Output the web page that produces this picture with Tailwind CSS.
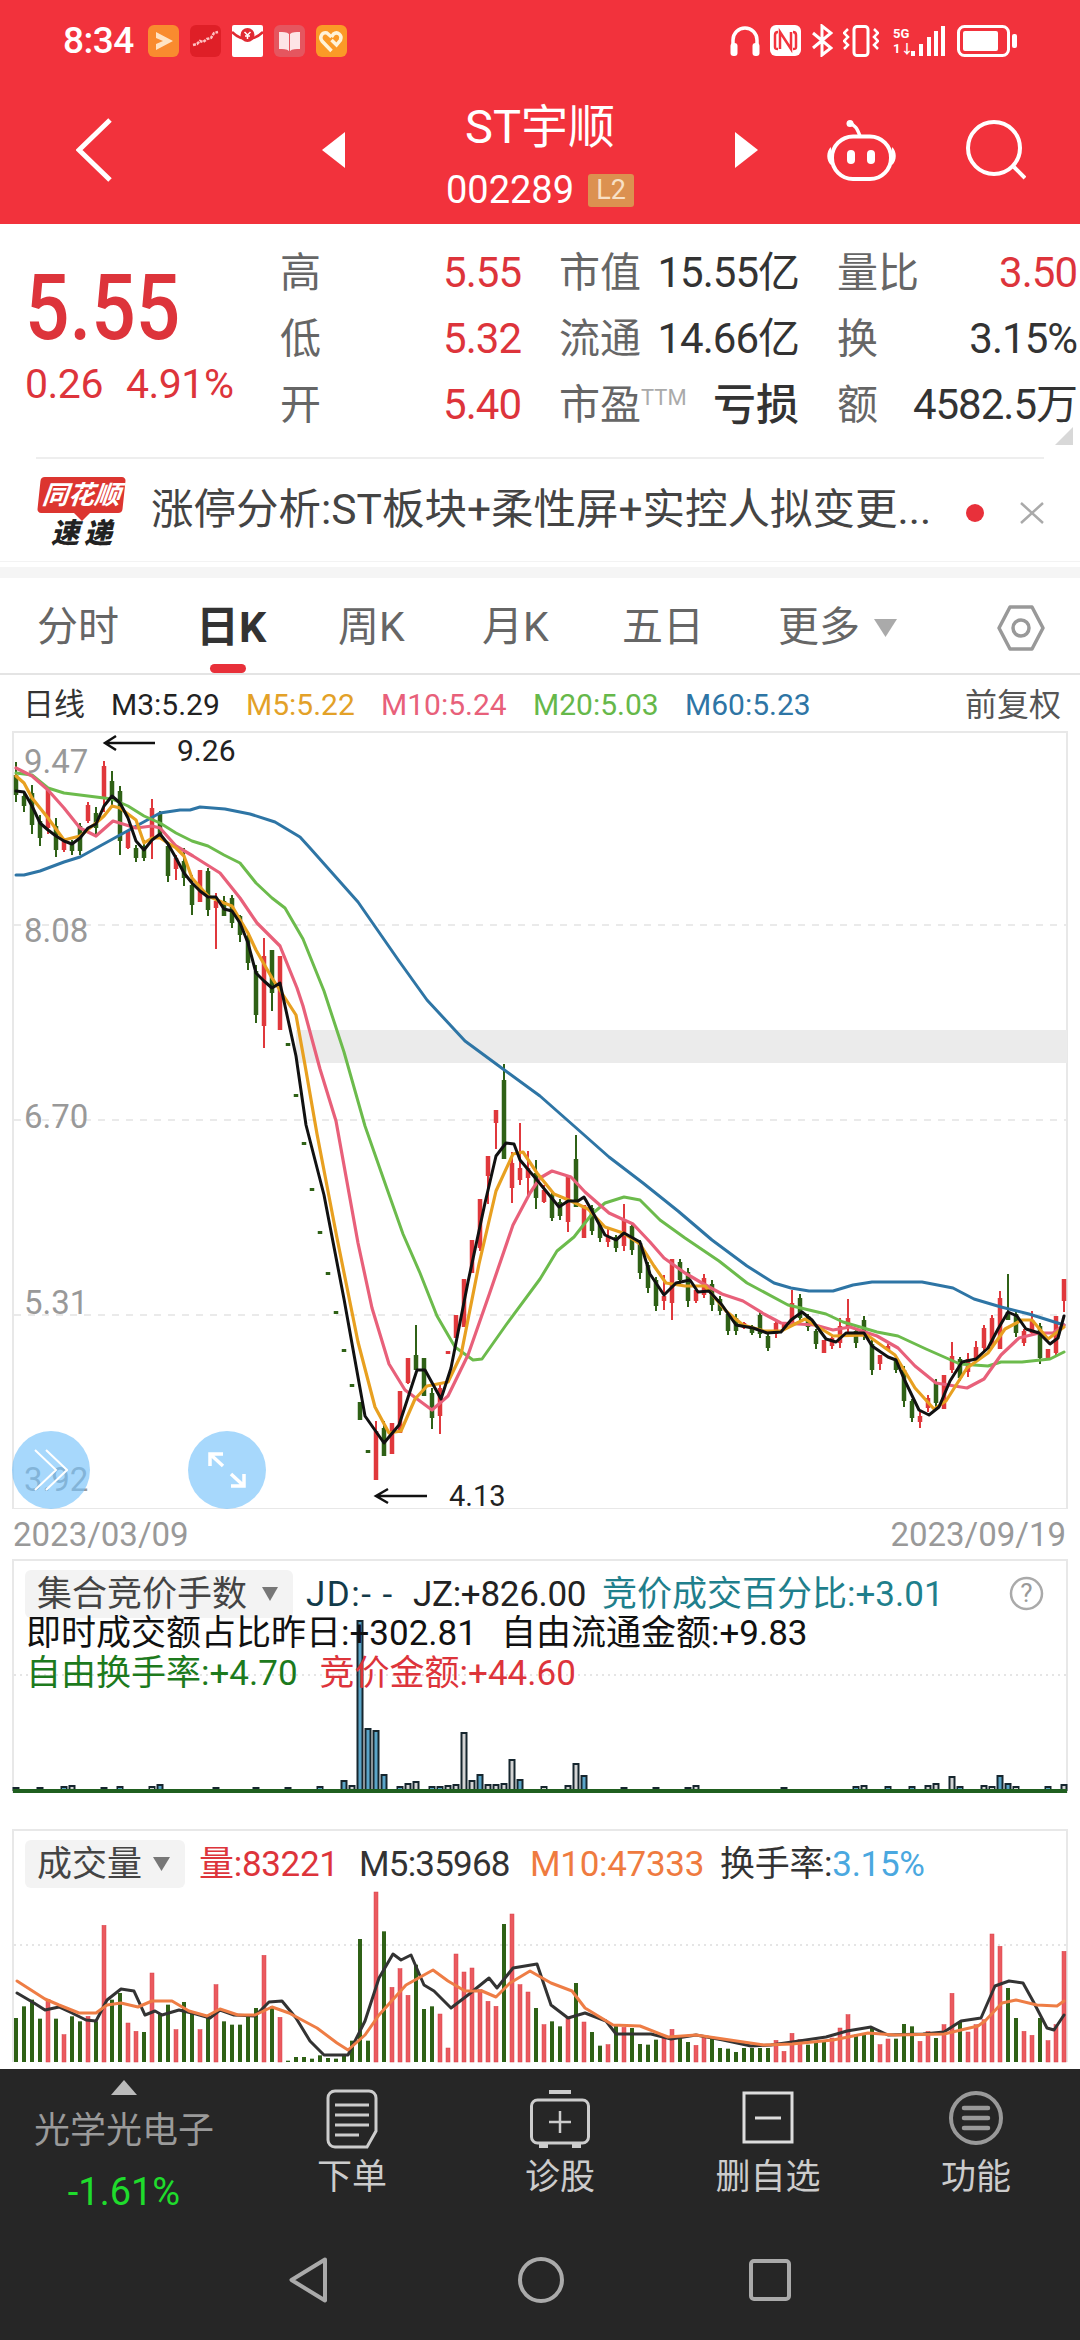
<!DOCTYPE html>
<html lang="zh-CN">
<head>
    <meta charset="UTF-8">
    <meta name="viewport" content="width=device-width, initial-scale=1.0">
    <title>ST宇顺 002289</title>
    <script src="https://cdn.jsdelivr.net/npm/@tailwindcss/browser@4"></script>
</head>
<body class="bg-white font-[Roboto,'Noto_Sans_CJK_SC',sans-serif]">
<div class="w-[1080px] h-[2340px] flex flex-col overflow-hidden">

    <!-- Red header -->
    <header class="h-[224px] shrink-0 bg-[#f2323c] text-white flex flex-col">
        <div class="h-[80px] flex items-center pl-[63px] pt-[1px]">
            <span class="w-[85px] text-[37px] leading-none font-medium tracking-[-0.5px] whitespace-nowrap">8:34</span>
            <div class="flex gap-[11px]">
                <svg class="w-[31px] h-[32px]" viewBox="0 0 31 32"><rect width="31" height="32" rx="6" fill="#f98b2f"/><path d="M8 7l17 9-17 9v-6l7-3-7-3z" fill="#ffe3c4"/></svg>
                <svg class="w-[31px] h-[32px]" viewBox="0 0 31 32"><rect width="31" height="32" rx="6" fill="#df1f27"/><path d="M3 20l4-1 3-3 3 1 4-3 4-1 3-5 4-1" fill="none" stroke="#ffc0c0" stroke-width="2.5" stroke-dasharray="3 1"/></svg>
                <svg class="w-[31px] h-[32px]" viewBox="0 0 31 32"><rect width="31" height="32" rx="2" fill="#fff"/><path d="M0 7c5 5 9 7 15.500 7S26 12 31 7" fill="none" stroke="#e02a33" stroke-width="2.500"/><circle cx="15.500" cy="10" r="7" fill="#e02a33"/><path d="M12.500 7l3 3 3-3M15.500 10v4M13 11h5" fill="none" stroke="#fff" stroke-width="1.500"/></svg>
                <svg class="w-[31px] h-[32px]" viewBox="0 0 31 32"><rect width="31" height="32" rx="6" fill="#e5565f"/><path d="M5 7c4 0 8 0 10 2v17c-2-2-6-2-10-2zM26 7c-4 0-8 0-10 2v17c2-2 6-2 10-2z" fill="#fde4e6"/></svg>
                <svg class="w-[31px] h-[32px]" viewBox="0 0 31 32"><rect width="31" height="32" rx="6" fill="#fb9a27"/><path d="M15.500 26L6 16c-3-4 0-9 5-8l4.500 4M15.500 12l2-3c4-3 9 1 7 6l-4 5-5-5" fill="none" stroke="#fff3d8" stroke-width="3.500"/></svg>
            </div>
            <div class="ml-auto mr-[63px] flex items-center">
                <svg class="w-[30px] h-[32px]" viewBox="0 0 30 32"><path d="M3 24V15a12 12 0 0124 0v9" fill="none" stroke="#fff" stroke-width="3.500"/><rect x="0.500" y="18" width="7" height="13" rx="3" fill="#fff"/><rect x="22.500" y="18" width="7" height="13" rx="3" fill="#fff"/></svg>
                <svg class="w-[31px] h-[31px] ml-[10px]" viewBox="0 0 31 31"><rect width="31" height="31" rx="6" fill="#fff"/><path d="M8 7c-2 0-3 1-3 3v12c0 2 1 2 3 2M10 24V7l11 17V7M23 7c2 0 3 1 3 3v12c0 2-1 2-3 2" fill="none" stroke="#f2323c" stroke-width="2.500"/></svg>
                <svg class="w-[22px] h-[33px] ml-[10px]" viewBox="0 0 22 33"><path d="M2 9l18 15-9 7V2l9 7L2 24" fill="none" stroke="#fff" stroke-width="3"/></svg>
                <svg class="w-[36px] h-[32px] ml-[10px]" viewBox="0 0 36 32"><rect x="11" y="1.500" width="14" height="29" rx="3" fill="none" stroke="#fff" stroke-width="3"/><path d="M5 4L1 8l4 4-4 4 4 4-4 4M31 4l4 4-4 4 4 4-4 4 4 4" fill="none" stroke="#fff" stroke-width="2.500"/></svg>
                <div class="w-[16px] ml-[14px] flex flex-col items-start leading-none text-white font-bold">
                    <span class="text-[13px] leading-[15px]">5G</span>
                    <span class="text-[13px] leading-[15px]">1↓</span>
                </div>
                <svg class="w-[36px] h-[32px] ml-[0px]" viewBox="0 0 36 32"><path d="M2 26h4v5H2zM10 19h4v12h-4zM18 12h4v19h-4zM25 6h4v25h-4zM32 1h4v30h-4z" fill="#fff"/></svg>
                <svg class="w-[60px] h-[32px] ml-[12px]" viewBox="0 0 60 32"><rect x="1.500" y="1.500" width="50" height="29" rx="6" fill="none" stroke="#fff" stroke-width="3"/><rect x="6" y="6" width="35" height="20" rx="2" fill="#fff"/><rect x="55" y="9" width="5" height="14" rx="2" fill="#fff"/></svg>
            </div>
        </div>
        <div class="h-[144px] flex items-center pl-[76px] pb-[4px]">
            <svg class="w-[36px] h-[64px]" viewBox="0 0 36 64"><path d="M34 2L3 32l31 30" fill="none" stroke="#fff" stroke-width="5"/></svg>
            <svg class="w-[23px] h-[36px] ml-[210px]" viewBox="0 0 23 36"><path d="M23 0v36L0 18z" fill="#fff"/></svg>
            <div class="w-[390px] flex flex-col items-center pt-[10px]">
                <div class="text-[47px] leading-[54px]">ST宇顺</div>
                <div class="flex items-center mt-[16px]">
                    <span class="text-[38px] leading-[40px]">002289</span>
                    <span class="ml-[14px] w-[46px] h-[33px] bg-[#dc9150] text-[#f8e0c6] rounded-[3px] text-[27px] leading-[33px] text-center">L2</span>
                </div>
            </div>
            <svg class="w-[23px] h-[36px]" viewBox="0 0 23 36"><path d="M0 0v36l23-18z" fill="#fff"/></svg>
            <svg class="w-[69px] h-[61px] ml-[69px]" viewBox="0 0 69 61"><path d="M33 16C30 8 28 5 22 3" fill="none" stroke="#fff" stroke-width="3.500" stroke-linecap="round"/><circle cx="23" cy="3.500" r="3.500" fill="#fff"/><rect x="5" y="16.500" width="59" height="42.500" rx="21" fill="none" stroke="#fff" stroke-width="4"/><path d="M4 27c-5 4-5 14 0 18zM65 27c5 4 5 14 0 18z" fill="#fff"/><rect x="20" y="30" width="8" height="14" rx="4" fill="#fff"/><rect x="40" y="30" width="8" height="14" rx="4" fill="#fff"/></svg>
            <svg class="w-[60px] h-[60px] ml-[70px]" viewBox="0 0 60 60"><circle cx="28" cy="28" r="26" fill="none" stroke="#fff" stroke-width="4"/><path d="M48 47l11 11" stroke="#fff" stroke-width="4"/></svg>
        </div>
    </header>

    <!-- Quote -->
    <section class="h-[235px] shrink-0 relative flex">
        <div class="w-[280px] shrink-0 pl-[25px] text-[#dd343b]">
            <div class="mt-[40px] h-[90px] flex items-center text-[90px] leading-none font-medium origin-left scale-x-[0.87]">5.55</div>
            <div class="mt-[8px] h-[44px] flex items-center text-[41px] leading-none tracking-[-0.5px] gap-[23px]">
                <span>0.26</span><span>4.91%</span>
            </div>
        </div>
        <div class="mt-[16px] grid grid-cols-[241px_240px_240px] grid-rows-[66px_66px_66px] gap-x-[38px] text-[#666] text-[41px] leading-none">
            <div class="flex items-center justify-between"><span>高</span><span class="text-[#dd343b] text-[42px] tracking-[-1px]">5.55</span></div>
            <div class="flex items-center justify-between"><span>市值</span><span class="text-[#333] text-[42px] tracking-[-1px]">15.55亿</span></div>
            <div class="flex items-center justify-between"><span>量比</span><span class="text-[#dd343b] text-[42px] tracking-[-1px]">3.50</span></div>
            <div class="flex items-center justify-between"><span>低</span><span class="text-[#dd343b] text-[42px] tracking-[-1px]">5.32</span></div>
            <div class="flex items-center justify-between"><span>流通</span><span class="text-[#333] text-[42px] tracking-[-1px]">14.66亿</span></div>
            <div class="flex items-center justify-between"><span>换</span><span class="text-[#333] text-[42px] tracking-[-1px]">3.15%</span></div>
            <div class="flex items-center justify-between"><span>开</span><span class="text-[#dd343b] text-[42px] tracking-[-1px]">5.40</span></div>
            <div class="flex items-center justify-between"><span class="flex items-start">市盈<span class="text-[22px] text-[#aaa] mt-[2px]">TTM</span></span><span class="text-[#333] text-[43px] font-medium">亏损</span></div>
            <div class="flex items-center justify-between"><span>额</span><span class="text-[#333] text-[42px] tracking-[-1px]">4582.5万</span></div>
        </div>
        <div class="absolute left-[1055px] top-[203px] w-[18px] h-[18px] bg-[#d8d8d8] [clip-path:polygon(100%_0,100%_100%,0_100%)]"></div>
        <div class="absolute left-[36px] right-[36px] bottom-0 h-[2px] bg-[#eee]"></div>
    </section>

    <!-- News ticker -->
    <section class="h-[103px] shrink-0 flex items-center relative border-b border-[#f3f3f3]">
        <div class="absolute left-[38px] top-[18px] w-[87px] flex flex-col items-center">
            <div class="w-[85px] h-[36px] bg-[#dc3530] rounded-[4px] -skew-x-6 text-white text-[26px] leading-[36px] font-bold italic text-center whitespace-nowrap">同花顺</div>
            <div class="w-0 h-0 border-x-[8px] border-x-transparent border-t-[8px] border-t-[#dc3530]"></div>
            <div class="text-[28px] leading-[28px] font-black italic text-[#222] tracking-[5px] -mt-[1px] pl-[5px] whitespace-nowrap">速递</div>
        </div>
        <div class="ml-[151px] w-[780px] text-[42.500px] leading-none text-[#444] whitespace-nowrap">涨停分析:ST板块+柔性屏+实控人拟变更...</div>
        <div class="absolute left-[966px] top-[45px] w-[18px] h-[18px] rounded-full bg-[#e8303a]"></div>
        <svg class="absolute left-[1020px] top-[43px] w-[24px] h-[22px]" viewBox="0 0 24 22"><path d="M1 1l22 20M23 1L1 21" stroke="#aaa" stroke-width="2.500"/></svg>
    </section>
    <div class="h-[5px] shrink-0"></div>
    <div class="h-[11px] shrink-0 bg-[#f5f5f5]"></div>

    <!-- Period tabs -->
    <nav class="h-[97px] shrink-0 relative flex items-center pl-[37px] pt-[4px] border-b-2 border-[#e4e4e4] text-[41px] leading-none text-[#666]">
        <span class="w-[159px]">分时</span>
        <span class="w-[142px] font-bold text-[#333] text-[43px]">日K</span>
        <span class="w-[144px]">周K</span>
        <span class="w-[140px]">月K</span>
        <span class="w-[156px]">五日</span>
        <span class="w-[96px]">更多</span>
        <svg class="w-[23px] h-[18px]" viewBox="0 0 23 18"><path d="M0 0h23L11.500 18z" fill="#aaa"/></svg>
        <svg class="w-[48px] h-[46px] ml-[100px]" viewBox="0 0 48 46"><path d="M13 2h22l11 21-11 21H13L2 23z" fill="none" stroke="#999" stroke-width="3.500" stroke-linejoin="round"/><circle cx="24" cy="23" r="8" fill="none" stroke="#999" stroke-width="3.500"/></svg>
        <div class="absolute left-[210px] bottom-0 w-[36px] h-[9px] rounded-full bg-[#e8303a]"></div>
    </nav>

    <!-- Moving average legend -->
    <div class="h-[56px] shrink-0 flex items-center pl-[23px] pr-[19px] pt-[3px] text-[30px] leading-none whitespace-nowrap">
        <span class="w-[88px] text-[#333] text-[31px]">日线</span>
        <span class="w-[135px] text-[#222]">M3:5.29</span>
        <span class="w-[135px] text-[#e3a128]">M5:5.22</span>
        <span class="w-[152px] text-[#e8607a]">M10:5.24</span>
        <span class="w-[152px] text-[#66b84a]">M20:5.03</span>
        <span class="w-[152px] text-[#2e75a5]">M60:5.23</span>
        <span class="ml-auto text-[32px] text-[#555]">前复权</span>
    </div>

    <!-- Main K-line chart -->
    <section class="h-[778px] shrink-0 relative text-[33px] leading-none text-[#999]">
        <svg id="kline" class="absolute inset-0 w-[1080px] h-[778px]" viewBox="0 733 1080 778"></svg>
        <span class="absolute left-[24px] top-[14px]">9.47</span>
        <span class="absolute left-[24px] top-[183px]">8.08</span>
        <span class="absolute left-[24px] top-[369px]">6.70</span>
        <span class="absolute left-[24px] top-[555px]">5.31</span>
        <span class="absolute left-[24px] top-[732px]">3.92</span>
        <span class="absolute left-[177px] top-[5px] text-[30px] text-[#222]">9.26</span>
        <span class="absolute left-[449px] top-[751px] text-[29px] text-[#222]">4.13</span>
        <div class="absolute left-[12px] top-[700px] w-[78px] h-[78px] rounded-full bg-[#78c3fa]/65 flex items-center justify-center">
            <svg class="w-[34px] h-[42px]" viewBox="0 0 34 42"><path d="M1 1l21 20-21 20M12 1l21 20-21 20" fill="none" stroke="#fff" stroke-width="2"/></svg>
        </div>
        <div class="absolute left-[188px] top-[700px] w-[78px] h-[78px] rounded-full bg-[#78c3fa]/65 flex items-center justify-center">
            <svg class="w-[40px] h-[38px]" viewBox="0 0 40 38"><path d="M3 3l13 12M3 15V3h13M37 35L24 23M37 23v12H24" fill="none" stroke="#fff" stroke-width="3.500"/></svg>
        </div>
    </section>
    <div class="h-[50px] shrink-0 flex items-center justify-between pl-[13px] pr-[14px] text-[33px] leading-none text-[#999]">
        <span>2023/03/09</span><span>2023/09/19</span>
    </div>

    <!-- Auction panel -->
    <section class="h-[270px] shrink-0 relative text-[35px] leading-none whitespace-nowrap">
        <svg id="auction" class="absolute inset-0 w-[1080px] h-[270px]" viewBox="0 1561 1080 270"></svg>
        <div class="relative flex items-center pt-[11px] h-[59px] pl-[25px]">
            <div class="w-[268px] h-[48px] rounded-[6px] bg-[#f3f3f3] flex items-center pl-[12px] text-[#444]">
                <span class="w-[225px]">集合竞价手数</span>
                <svg class="w-[16px] h-[16px]" viewBox="0 0 16 16"><path d="M0 1h16L8 15z" fill="#777"/></svg>
            </div>
            <span class="absolute left-[306px] top-[18px] text-[#123b4a] tracking-[1.500px]">JD:- -</span>
            <span class="absolute left-[413px] top-[18px] text-[#222] tracking-[-0.3px]">JZ:+826.00</span>
            <span class="absolute left-[602px] top-[18px] text-[#1f7f8c]">竞价成交百分比:+3.01</span>
            <svg class="absolute left-[1009px] top-[17px] w-[35px] h-[35px]" viewBox="0 0 35 35"><circle cx="17.500" cy="17.500" r="15.500" fill="none" stroke="#aaa" stroke-width="2.500"/></svg>
            <span class="absolute left-[1009px] top-[21px] w-[35px] text-center text-[26px] text-[#999]">?</span>
        </div>
        <div class="relative pl-[26px] h-[40px] flex items-center gap-[24px] text-[#111] mt-[-5px]"><span>即时成交额占比昨日:+302.81</span><span>自由流通金额:+9.83</span></div>
        <div class="relative pl-[26px] h-[40px] flex items-center gap-[22px]"><span class="text-[#1d7a1d]">自由换手率:+4.70</span><span class="text-[#dd343b]">竞价金额:+44.60</span></div>
    </section>

    <!-- Volume panel -->
    <section class="h-[240px] shrink-0 relative text-[35px] leading-none whitespace-nowrap">
        <svg id="volume" class="absolute inset-0 w-[1080px] h-[240px]" viewBox="0 1831 1080 240"></svg>
        <div class="relative pt-[11px] pl-[25px] flex items-center h-[59px]">
            <div class="w-[160px] h-[48px] rounded-[6px] bg-[#f3f3f3] flex items-center pl-[12px] text-[#444]">
                <span class="w-[116px]">成交量</span>
                <svg class="w-[17px] h-[16px]" viewBox="0 0 17 16"><path d="M0 1h17L8.500 15z" fill="#777"/></svg>
            </div>
            <span class="absolute left-[199px] top-[18px] text-[#dd343b] tracking-[-0.3px]">量:83221</span>
            <span class="absolute left-[359px] top-[18px] text-[#333] tracking-[-0.8px]">M5:35968</span>
            <span class="absolute left-[530px] top-[18px] text-[#ef7b3f] tracking-[-0.3px]">M10:47333</span>
            <span class="absolute left-[720px] top-[18px] text-[#333] tracking-[-0.3px]">换手率:<span class="text-[#4aa8e0]">3.15%</span></span>
        </div>
    </section>

    <!-- Bottom toolbar -->
    <footer class="flex-1 bg-[#262626] flex flex-col">
        <div class="h-[146px] flex">
            <div class="w-[248px] flex flex-col items-center pt-[11px]">
                <svg class="w-[26px] h-[15px]" viewBox="0 0 26 15"><path d="M13 0l13 15H0z" fill="#bbb"/></svg>
                <span class="mt-[18px] text-[36px] leading-none text-[#9a9a9a]">光学光电子</span>
                <span class="mt-[24px] text-[38px] leading-none text-[#1fdc2c]">-1.61%</span>
            </div>
            <div class="flex-1 grid grid-cols-4 pt-[20px] text-[35px] leading-none text-[#ccc] text-center">
                <div class="flex flex-col items-center">
                    <svg class="w-[52px] h-[60px]" viewBox="0 0 52 60"><path d="M9 2h34a7 7 0 017 7v33l-9 16H9a7 7 0 01-7-7V9a7 7 0 017-7z" fill="none" stroke="#ccc" stroke-width="3"/><path d="M9 16h34M9 26h34M9 36h34M9 46h24" stroke="#ccc" stroke-width="3"/></svg>
                    <span class="mt-[11px]">下单</span>
                </div>
                <div class="flex flex-col items-center">
                    <svg class="w-[60px] h-[60px]" viewBox="0 0 60 60"><path d="M19 3h22" stroke="#ccc" stroke-width="4"/><rect x="1.500" y="11" width="57" height="43" rx="6" fill="none" stroke="#ccc" stroke-width="3"/><path d="M30 22v22M19 33h22" stroke="#ccc" stroke-width="2.500"/><path d="M9 54h9v5H9zM42 54h9v5h-9z" fill="#ccc"/></svg>
                    <span class="mt-[11px]">诊股</span>
                </div>
                <div class="flex flex-col items-center">
                    <svg class="w-[52px] h-[60px]" viewBox="0 0 52 60"><rect x="2" y="4" width="48" height="49" fill="none" stroke="#ddd" stroke-width="3"/><path d="M13 29h26" stroke="#ddd" stroke-width="3"/></svg>
                    <span class="mt-[11px]">删自选</span>
                </div>
                <div class="flex flex-col items-center">
                    <svg class="w-[54px] h-[60px]" viewBox="0 0 54 60"><circle cx="27" cy="29" r="25" fill="none" stroke="#999" stroke-width="4"/><path d="M15 19h24M15 29h24M15 39h24" stroke="#999" stroke-width="4.500" stroke-linecap="round"/></svg>
                    <span class="mt-[11px]">功能</span>
                </div>
            </div>
        </div>
        <div class="flex items-start pt-[42px]">
            <svg class="w-[39px] h-[46px] ml-[289px]" viewBox="0 0 39 46"><path d="M36 2.500L2.500 23 36 43.500z" fill="none" stroke="#aaa" stroke-width="4" stroke-linejoin="round"/></svg>
            <svg class="w-[46px] h-[46px] ml-[190px]" viewBox="0 0 46 46"><circle cx="23" cy="23" r="21" fill="none" stroke="#aaa" stroke-width="4"/></svg>
            <svg class="w-[42px] h-[42px] ml-[185px] mt-[2px]" viewBox="0 0 42 42"><rect x="2" y="2" width="38" height="38" rx="3" fill="none" stroke="#aaa" stroke-width="4"/></svg>
        </div>
    </footer>
</div>

<script>
    var RED = '#e0383c', GREEN = '#2f6116';
    // candle data: colour, wick top, body top, body bottom, wick bottom (pixel rows)
    var candles = [
        ['g',764,777,797,804],['g',793,798,808,814],['g',787,795,827,836],['g',817,823,840,848],['r',792,792,830,836],
        ['g',820,828,852,859],['r',840,843,852,854],['g',842,845,853,857],['g',825,828,853,857],['r',804,807,823,825],
        ['g',809,815,830,839],['r',763,768,800,814],['g',773,783,800,808],['g',788,793,843,857],['r',833,833,850,851],
        ['g',847,850,860,864],['g',842,848,860,863],['r',801,810,840,861],['g',813,815,838,840],['g',847,848,878,884],
        ['r',857,860,871,882],['g',850,863,880,888],['g',877,887,907,917],['r',872,872,904,904],['g',870,873,912,918],
        ['r',895,903,910,951],['g',898,903,918,918],['g',897,900,925,930],['g',917,918,937,944],['g',937,940,965,972],
        ['g',967,973,1017,1025],['r',940,958,1028,1050],['g',952,952,995,1013],['r',958,958,1032,1032],
        ['g',1045,1045,1048,1048],['g',1096,1096,1099,1099],['g',1144,1144,1147,1147],['g',1190,1190,1193,1193],
        ['g',1233,1233,1236,1236],['g',1274,1274,1277,1277],['g',1313,1313,1316,1316],['g',1351,1351,1354,1354],
        ['g',1386,1386,1389,1389],['g',1404,1404,1422,1422],['g',1452,1452,1455,1455],['r',1423,1433,1482,1482],
        ['g',1423,1430,1458,1458],['r',1425,1425,1456,1456],['r',1393,1393,1435,1435],['r',1360,1360,1385,1386],
        ['g',1327,1357,1372,1372],['g',1360,1360,1398,1398],['g',1390,1395,1420,1431],['r',1386,1390,1418,1436],
        ['r',1353,1353,1356,1356],['r',1317,1317,1340,1340],['r',1281,1281,1329,1329],['r',1242,1242,1275,1275],
        ['r',1201,1201,1250,1253],['r',1158,1158,1178,1206],['r',1112,1112,1125,1151],['g',1066,1082,1161,1161],
        ['r',1154,1165,1190,1205],['r',1125,1170,1182,1187],['r',1153,1170,1180,1197],['g',1162,1175,1200,1211],
        ['r',1187,1192,1204,1205],['g',1194,1197,1220,1223],['g',1201,1204,1218,1222],['r',1177,1177,1224,1234],
        ['g',1137,1161,1209,1209],['r',1207,1207,1240,1240],['g',1207,1210,1233,1237],['g',1224,1226,1240,1244],
        ['r',1230,1238,1244,1249],['g',1237,1239,1250,1254],['r',1206,1222,1248,1253],['g',1226,1228,1252,1257],
        ['g',1242,1245,1275,1281],['g',1264,1267,1290,1295],['g',1279,1282,1308,1313],['r',1277,1298,1303,1312],
        ['r',1261,1261,1305,1322],['g',1261,1264,1282,1286],['g',1270,1274,1303,1309],['r',1292,1292,1303,1305],
        ['r',1276,1280,1297,1300],['g',1282,1286,1307,1313],['g',1298,1301,1313,1317],['g',1314,1316,1333,1337],
        ['g',1316,1320,1333,1337],['r',1324,1325,1330,1331],['g',1327,1329,1335,1337],['g',1314,1317,1336,1340],
        ['g',1335,1338,1350,1353],['r',1322,1325,1336,1340],['r',1324,1325,1330,1331],['r',1292,1305,1327,1327],
        ['g',1296,1300,1320,1325],['g',1316,1318,1329,1333],['g',1331,1333,1346,1351],['r',1342,1342,1355,1355],
        ['r',1338,1340,1348,1351],['r',1320,1328,1345,1350],['r',1301,1320,1330,1335],['g',1331,1333,1345,1350],
        ['g',1318,1322,1338,1342],['g',1342,1346,1372,1377],['r',1357,1357,1366,1372],['r',1346,1348,1352,1353],
        ['g',1357,1360,1372,1375],['g',1368,1372,1403,1409],['g',1401,1403,1420,1424],['r',1412,1418,1424,1430],
        ['r',1397,1400,1410,1414],['g',1381,1384,1405,1409],['r',1377,1377,1411,1411],['r',1344,1358,1372,1375],
        ['g',1359,1361,1380,1383],['r',1355,1361,1374,1379],['r',1343,1349,1360,1364],['r',1327,1330,1350,1355],
        ['r',1317,1320,1347,1351],['r',1293,1300,1351,1351],['g',1276,1314,1322,1322],['g',1314,1316,1335,1339],
        ['r',1331,1333,1345,1348],['r',1313,1322,1335,1337],['g',1325,1328,1360,1366],['r',1351,1351,1360,1360],
        ['r',1318,1318,1355,1357],['r',1281,1281,1303,1314]
    ];
    var LINE_M3 = [[16,793],[24,794],[32,808],[40,825],[48,832],[56,838],[64,843],[72,846],[80,840],[88,830],[96,826],[104,808],[112,798],[120,805],[128,820],[136,843],[144,852],[152,842],[160,836],[168,846],[176,860],[184,875],[192,885],[200,893],[208,899],[216,899],[224,911],[232,913],[240,925],[248,945],[256,975],[264,983],[272,990],[280,985],[296,1058],[306,1127],[324,1197],[344,1301],[365,1418],[384,1445],[399,1427],[417,1372],[425,1372],[441,1401],[451,1370],[468,1284],[485,1205],[496,1158],[506,1145],[514,1146],[520,1162],[537,1182],[559,1209],[568,1203],[578,1203],[584,1199],[592,1213],[605,1237],[616,1242],[624,1235],[640,1244],[650,1276],[664,1297],[676,1285],[690,1282],[698,1294],[709,1293],[722,1307],[736,1327],[753,1330],[767,1335],[781,1334],[791,1322],[802,1314],[812,1322],[826,1341],[836,1344],[846,1335],[864,1335],[872,1348],[888,1359],[896,1362],[905,1383],[919,1412],[929,1417],[939,1409],[950,1383],[962,1364],[976,1361],[988,1350],[998,1331],[1008,1314],[1017,1318],[1026,1331],[1039,1335],[1050,1346],[1058,1340],[1064,1318]];
    var LINE_M5 = [[16,778],[24,785],[32,800],[48,820],[64,842],[72,840],[80,838],[96,825],[104,818],[112,808],[120,810],[136,822],[144,845],[152,840],[160,840],[176,850],[184,858],[192,880],[208,898],[224,905],[232,908],[248,935],[256,952],[272,980],[285,1000],[296,1017],[305,1067],[317,1136],[337,1240],[358,1344],[375,1409],[389,1435],[401,1433],[415,1401],[427,1388],[448,1384],[461,1357],[479,1266],[496,1193],[513,1156],[523,1154],[537,1175],[554,1196],[571,1203],[588,1211],[605,1229],[623,1235],[640,1246],[654,1268],[666,1285],[685,1288],[705,1288],[726,1313],[743,1327],[764,1333],[781,1333],[805,1321],[833,1338],[867,1337],[895,1357],[915,1390],[934,1411],[946,1403],[967,1370],[988,1355],[1005,1331],[1022,1322],[1032,1322],[1048,1341],[1064,1329]];
    var LINE_M10 = [[16,770],[32,778],[48,792],[64,810],[80,830],[96,838],[113,823],[136,830],[152,828],[160,830],[176,848],[193,858],[220,875],[240,900],[257,925],[280,948],[297,990],[303,1008],[320,1071],[336,1123],[358,1245],[372,1310],[389,1366],[405,1392],[432,1412],[448,1398],[468,1357],[489,1297],[513,1227],[530,1195],[540,1180],[552,1173],[571,1179],[585,1194],[609,1215],[633,1226],[650,1244],[664,1260],[685,1275],[702,1285],[722,1296],[743,1303],[764,1316],[781,1325],[815,1327],[833,1332],[850,1329],[877,1338],[898,1350],[915,1368],[936,1385],[967,1390],[984,1381],[1001,1357],[1019,1340],[1039,1335],[1053,1335],[1064,1327]];
    var LINE_M20 = [[16,775],[32,777],[48,790],[64,795],[80,797],[96,799],[112,801],[128,808],[144,818],[160,825],[176,835],[192,843],[208,848],[224,857],[240,865],[256,885],[272,900],[285,910],[303,941],[324,993],[344,1054],[365,1128],[386,1188],[403,1236],[420,1275],[437,1318],[455,1349],[473,1362],[482,1361],[506,1327],[540,1281],[557,1253],[574,1239],[592,1216],[605,1205],[624,1199],[640,1202],[660,1222],[685,1240],[719,1263],[747,1285],[788,1307],[826,1316],[843,1324],[877,1334],[898,1338],[926,1351],[960,1366],[988,1368],[1001,1364],[1022,1364],[1050,1361],[1064,1354]];
    var LINE_M60 = [[16,877],[24,877],[40,873],[64,864],[80,859],[100,848],[120,837],[140,826],[160,815],[180,812],[190,812],[200,809],[225,811],[250,816],[275,824],[300,839],[310,850],[358,904],[399,963],[427,1002],[465,1043],[503,1071],[540,1098],[574,1128],[609,1159],[643,1185],[678,1213],[712,1242],[747,1268],[774,1285],[791,1290],[809,1293],[833,1293],[853,1287],[872,1284],[922,1284],[953,1290],[974,1301],[1001,1309],[1029,1316],[1064,1327]];

    function rect(x, y, w, h, fill, extra) {
        return '<rect x="' + x + '" y="' + y + '" width="' + w + '" height="' + h + '" fill="' + fill + '" ' + (extra || '') + '/>';
    }
    function line(pts, color, width) {
        var s = pts.map(function (p) { return p[0] + ',' + p[1]; }).join(' ');
        return '<polyline points="' + s + '" fill="none" stroke="' + color + '" stroke-width="' + width + '" stroke-linejoin="round" stroke-linecap="round"/>';
    }
    function hdash(y, x1, x2, color, dash) {
        return '<line x1="' + x1 + '" x2="' + x2 + '" y1="' + y + '" y2="' + y + '" stroke="' + color + '" stroke-width="1.500" stroke-dasharray="' + dash + '"/>';
    }
    function box(top, bottom) {
        return rect(13, top, 1054, 2, '#e8e8e8') + rect(12, top, 2, bottom - top, '#e8e8e8') + rect(1066, top, 2, bottom - top, '#e8e8e8');
    }

    // main chart
    var k = box(733, 1511) + rect(13, 1510, 1054, 2, '#e8e8e8');
    [927, 1122, 1317].forEach(function (y) { k += hdash(y, 14, 1066, '#e4e4e4', '7 7'); });
    k += rect(296, 1032, 771, 33, '#ebebeb');
    candles.forEach(function (c, i) {
        var x = 16 + 8 * i, col = c[0] == 'r' ? RED : GREEN;
        k += rect(x - 1, c[1], 2, c[4] - c[1], col);
        k += rect(x - 2.25, c[2], 4.5, c[3] - c[2], col);
    });
    k += line(LINE_M60, '#2e75a5', 3) + line(LINE_M20, '#6cbb4c', 3) + line(LINE_M10, '#e8607a', 3.2) + line(LINE_M5, '#e8a020', 3.2) + line(LINE_M3, '#111', 3);
    // 9.26 / 4.13 arrows
    k += '<path d="M155 745H105M116 738l-11 7 11 7" fill="none" stroke="#111" stroke-width="2.500"/>';
    k += '<path d="M427 1498H376M388 1491l-12 7 12 7" fill="none" stroke="#111" stroke-width="2.500"/>';
    document.getElementById('kline').innerHTML = k;

    // auction bars: index, top, b=blue / k=hollow
    var auctionBars = [[0,1790,'b'],[3,1790,'b'],[6,1789,'b'],[7,1788,'k'],[11,1790,'b'],[13,1789,'b'],[17,1789,'k'],[18,1787,'b'],[25,1790,'b'],[30,1790,'b'],[34,1790,'k'],[38,1789,'b'],[41,1783,'b'],[42,1788,'k'],[43,1623,'b'],[44,1731,'b'],[45,1733,'b'],[46,1777,'b'],[48,1789,'b'],[49,1786,'k'],[50,1784,'k'],[52,1789,'b'],[53,1789,'b'],[54,1788,'k'],[55,1787,'k'],[56,1735,'k'],[57,1783,'k'],[58,1777,'b'],[59,1787,'k'],[60,1787,'k'],[61,1786,'k'],[62,1762,'k'],[63,1782,'b'],[66,1789,'k'],[69,1788,'k'],[70,1766,'k'],[71,1778,'b'],[76,1790,'b'],[80,1790,'b'],[84,1790,'b'],[85,1788,'k'],[96,1790,'b'],[105,1789,'b'],[106,1788,'k'],[109,1789,'b'],[112,1789,'b'],[114,1788,'k'],[115,1786,'k'],[117,1779,'k'],[118,1789,'b'],[121,1788,'k'],[122,1789,'k'],[123,1778,'b'],[124,1786,'b'],[125,1789,'k'],[129,1789,'b'],[131,1787,'k']];
    var a = box(1561, 1795) + hdash(1677, 14, 1066, '#ddd', '2 4');
    auctionBars.forEach(function (b) {
        var x = 16 + 8 * b[0];
        a += rect(x - 2.5, b[1], 5, 1792 - b[1], b[2] == 'b' ? '#5aa5c8' : '#d4d4d4', 'stroke="#16262e" stroke-width="2"');
    });
    a += rect(13, 1791, 1054, 4, '#1f5f1f');
    document.getElementById('auction').innerHTML = a;

    // volume bar tops, one per candle (read off the chart, 3px per row above 1810)
    var volTops = [630,595,575,632,575,632,680,625,640,625,640,352,575,555,645,670,672,495,615,590,665,582,610,665,625,530,640,650,650,625,600,442,595,628,758,747,747,752,742,750,752,742,698,393,698,252,370,538,482,562,470,603,595,618,720,438,492,480,545,580,595,348,318,530,552,600,650,640,655,630,525,642,672,713,710,650,658,660,708,710,695,690,664,690,702,712,685,690,720,722,732,720,720,720,720,697,730,676,695,710,700,700,690,660,620,680,680,660,710,693,692,648,655,700,670,690,650,556,640,672,650,635,378,415,540,630,670,682,630,698,650,430];
    var volGreen = [0,1,2,3,5,7,8,10,12,13,16,18,19,21,22,24,26,27,28,29,30,32,34,35,36,37,38,39,40,41,42,43,44,46,50,51,52,61,65,67,68,70,72,73,75,77,78,79,80,83,84,87,88,89,90,91,92,93,94,99,100,101,105,106,107,110,111,112,115,118,124,125,128];
    var v = box(1831, 2064);
    v += hdash(1947, 14, 1066, '#ddd', '2 4');
    volTops.forEach(function (t, i) {
        var x = 16 + 8 * i, y = 1810 + t / 3, g = volGreen.indexOf(i) >= 0;
        v += rect(x - 2, y, 4, 2064 - y, g ? GREEN : '#ea5a5f', g ? '' : 'stroke="#d9404a" stroke-width="0.500"');
    });
    var volBlack = [[25,555],[50,585],[65,605],[85,598],[105,615],[125,635],[140,640],[155,575],[175,542],[195,550],[210,620],[225,610],[235,620],[260,605],[285,618],[305,630],[320,605],[340,622],[370,625],[390,582],[410,578],[430,630],[450,700],[470,740],[505,740],[530,640],[550,510],[570,437],[582,455],[597,440],[615,530],[630,550],[655,600],[680,560],[710,510],[722,540],[745,480],[780,468],[800,590],[825,630],[850,615],[880,640],[895,678],[945,678],[975,692],[1010,682],[1050,695],[1090,715],[1120,712],[1160,700],[1200,688],[1230,670],[1265,657],[1290,680],[1340,678],[1370,672],[1395,640],[1425,630],[1445,535],[1465,520],[1485,525],[1500,580],[1520,660],[1530,665],[1545,620]];
    var volOrange = [[25,520],[65,572],[85,590],[115,615],[140,615],[155,592],[175,585],[200,597],[220,580],[250,578],[275,608],[300,625],[320,602],[345,622],[370,620],[395,598],[420,615],[460,660],[490,705],[505,725],[530,680],[550,620],[590,530],[628,487],[650,520],[675,550],[700,548],[720,568],[740,525],[770,490],[800,525],[830,548],[850,600],[890,650],[930,655],[970,688],[1010,680],[1060,695],[1110,710],[1150,708],[1210,695],[1260,675],[1300,682],[1370,678],[1420,655],[1430,640],[1455,585],[1475,577],[1505,590],[1535,593],[1545,578]];
    function zoomPts(p) { return p.map(function (q) { return [Math.round(q[0] / 1.452), Math.round(1810 + q[1] / 3)]; }); }
    v += line(zoomPts(volBlack), '#333', 3) + line(zoomPts(volOrange), '#ee7d45', 3);
    document.getElementById('volume').innerHTML = v;
</script>
</body>
</html>
